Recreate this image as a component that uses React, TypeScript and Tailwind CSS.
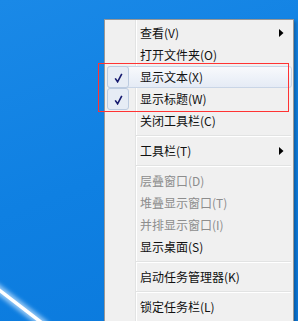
import React from "react";

type Item =
  | { kind: "item"; label: string; checked?: boolean; hover?: boolean; disabled?: boolean; sub?: boolean }
  | { kind: "sep" };

const items: Item[] = [
  { kind: "item", label: "查看(V)", sub: true },
  { kind: "item", label: "打开文件夹(O)" },
  { kind: "item", label: "显示文本(X)", checked: true, hover: true },
  { kind: "item", label: "显示标题(W)", checked: true },
  { kind: "item", label: "关闭工具栏(C)" },
  { kind: "sep" },
  { kind: "item", label: "工具栏(T)", sub: true },
  { kind: "sep" },
  { kind: "item", label: "层叠窗口(D)", disabled: true },
  { kind: "item", label: "堆叠显示窗口(T)", disabled: true },
  { kind: "item", label: "并排显示窗口(I)", disabled: true },
  { kind: "item", label: "显示桌面(S)" },
  { kind: "sep" },
  { kind: "item", label: "启动任务管理器(K)" },
  { kind: "sep" },
  { kind: "item", label: "锁定任务栏(L)" },
];

function Check() {
  return (
    <svg width="9" height="10" viewBox="0 0 9 10" className="block">
      <path d="M1.2 5.4 L3.6 8.8 L7.8 0.8" fill="none" stroke="#15196e" strokeWidth="1.6" strokeLinejoin="miter" />
    </svg>
  );
}

function Arrow() {
  return (
    <svg width="5" height="8" viewBox="0 0 5 8" className="block">
      <path d="M0 0 L4.5 4 L0 8 Z" fill="#000" />
    </svg>
  );
}

export default function App() {
  return (
    <div
      className="relative w-[298px] h-[321px] overflow-hidden bg-[linear-gradient(160deg,#1a89e7_0%,#0f80e2_50%,#0a79dc_100%)]"
      style={{ fontFamily: '"Noto Sans CJK SC", "Microsoft YaHei", sans-serif' }}
    >
      {/* wallpaper streak */}
      <svg className="absolute left-0 top-0" width="298" height="321" viewBox="0 0 298 321">
        <defs>
          <filter id="blur1" x="-50%" y="-50%" width="200%" height="200%">
            <feGaussianBlur stdDeviation="2.2" />
          </filter>
        </defs>
        <line x1="-6" y1="286" x2="46" y2="326" stroke="#cfe8ff" strokeWidth="9" opacity="0.7" filter="url(#blur1)" />
        <line x1="-6" y1="286" x2="46" y2="326" stroke="#ffffff" strokeWidth="3.5" />
      </svg>

      <div className="pl-[104px] pt-[19px]">
        <div className="relative w-[190px] h-[320px] border border-[#979797] border-b-0 bg-[#f0f0f0] shadow-[2px_2px_3px_rgba(0,0,0,0.25)]">
          {/* gutter line */}
          <div className="absolute left-[30px] top-0 bottom-0 w-px bg-[#e2e3e3]" />
          <div className="absolute left-[31px] top-0 bottom-0 w-px bg-[#ffffff]" />

          <div className="relative flex flex-col pt-[2px]">
            {items.map((it, i) =>
              it.kind === "sep" ? (
                <div key={i} className="h-[8px] pl-[31px] pr-[2px] pt-[3px]">
                  <div className="h-px bg-[#e2e3e3]" />
                  <div className="h-px bg-white" />
                </div>
              ) : (
                <div
                  key={i}
                  className={
                    "relative ml-[2px] mr-[1px] h-[22px] flex items-center rounded-[3px] " +
                    (it.hover
                      ? "border border-[#c9d5e6] bg-[linear-gradient(180deg,#f8f9fc_0%,#eef2f9_50%,#e5ebf5_100%)]"
                      : "border border-transparent")
                  }
                >
                  {it.checked && (
                    <div className="absolute left-[-1px] top-[-1px] w-[22px] h-[22px] rounded-[3px] border border-[#bccbe0] bg-[#e6ecf5] flex items-center justify-center">
                      <div className="mt-[2px] ml-[1px]">
                        <Check />
                      </div>
                    </div>
                  )}
                  <span
                    className={
                      "pl-[32px] text-[12px] leading-[22px] whitespace-nowrap " +
                      (it.disabled ? "text-[#8d8d8d]" : "text-[#111111]")
                    }
                  >
                    {it.label}
                  </span>
                  {it.sub && (
                    <div className="ml-auto mr-[7px]">
                      <Arrow />
                    </div>
                  )}
                </div>
              )
            )}
          </div>
        </div>
      </div>

      {/* annotation rectangle */}
      <div className="absolute left-[98px] top-[63px] w-[191px] h-[49px] border border-[#ff3333]" />
    </div>
  );
}
